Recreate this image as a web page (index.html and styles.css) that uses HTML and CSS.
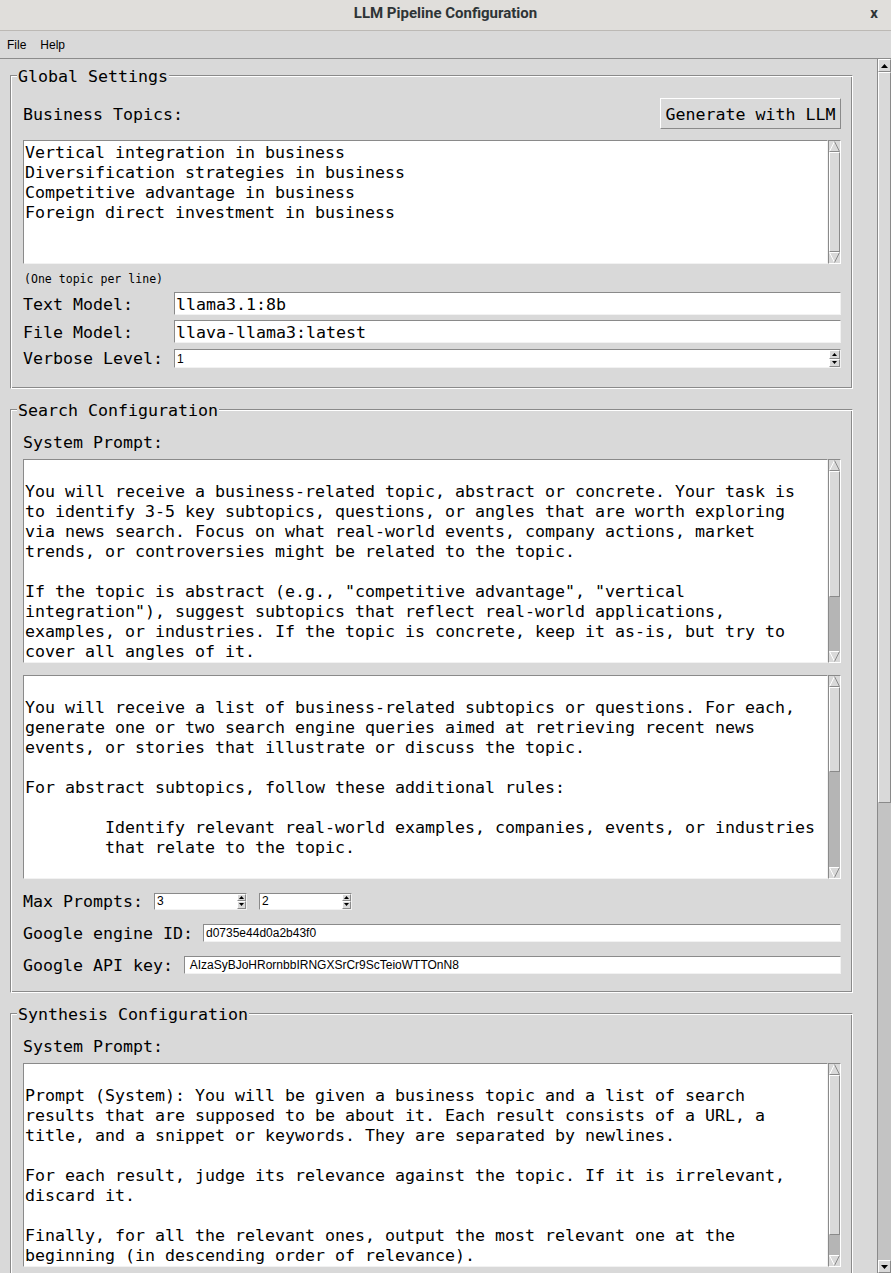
FILE: index.html
```html
<!DOCTYPE html>
<html>
<head>
<meta charset="utf-8">
<title>LLM Pipeline Configuration</title>
<link rel="stylesheet" href="styles.css">
</head>
<body>
<div class="window">
  <div class="titlebar">
    <span class="title">LLM Pipeline Configuration</span>
    <span class="close">x</span>
  </div>
  <div class="menubar">
    <span class="menu">File</span><span class="menu">Help</span>
  </div>
  <div class="main">
    <div class="content">

      <section class="lframe">
        <div class="lf-head"><span class="lf-left"></span><span class="lf-title">Global Settings</span><span class="lf-right"></span></div>
        <div class="lf-body body-global">
          <div class="row-btn">
            <span class="lbl">Business Topics:</span>
            <button class="btn">Generate with LLM</button>
          </div>
          <div class="textbox tb-topics">
            <div class="text">Vertical integration in business
Diversification strategies in business
Competitive advantage in business
Foreign direct investment in business</div>
            <div class="tsb">
              <svg class="tsb-arrow" width="11" height="11" viewBox="0 0 11 11"><polygon points="0.5,10.5 5.5,0.5 10.5,10.5" fill="#d9d9d9"/><polyline points="0.5,10.5 5.5,0.5" stroke="#fff" fill="none"/><polyline points="5.5,0.5 10.5,10.5 0.5,10.5" stroke="#8a8a8a" fill="none"/></svg>
              <div class="tsb-track"><div class="tsb-slider" style="height:100%"></div></div>
              <svg class="tsb-arrow" width="11" height="11" viewBox="0 0 11 11"><polygon points="0.5,0.5 10.5,0.5 5.5,10.5" fill="#d9d9d9"/><polyline points="5.5,10.5 0.5,0.5 10.5,0.5" stroke="#fff" fill="none"/><polyline points="10.5,0.5 5.5,10.5" stroke="#8a8a8a" fill="none"/></svg>
            </div>
          </div>
          <div class="hint">(One topic per line)</div>
          <div class="form">
            <span class="lbl">Text Model:</span>
            <div class="entry">llama3.1:8b</div>
            <span class="lbl">File Model:</span>
            <div class="entry">llava-llama3:latest</div>
            <span class="lbl">Verbose Level:</span>
            <div class="spin spin-v">
              <span class="spin-val">1</span>
              <span class="spin-arrows">
                <span class="spin-btn"><svg width="5" height="3" viewBox="0 0 5 3"><polygon points="0,3 5,3 2.5,0"/></svg></span>
                <span class="spin-btn"><svg width="5" height="3" viewBox="0 0 5 3"><polygon points="0,0 5,0 2.5,3"/></svg></span>
              </span>
            </div>
          </div>
        </div>
      </section>

      <section class="lframe">
        <div class="lf-head"><span class="lf-left"></span><span class="lf-title">Search Configuration</span><span class="lf-right"></span></div>
        <div class="lf-body body-search">
          <div class="lbl-row">System Prompt:</div>
          <div class="textbox tb-prompt">
            <div class="text">
You will receive a business-related topic, abstract or concrete. Your task is
to identify 3-5 key subtopics, questions, or angles that are worth exploring
via news search. Focus on what real-world events, company actions, market
trends, or controversies might be related to the topic.

If the topic is abstract (e.g., "competitive advantage", "vertical
integration"), suggest subtopics that reflect real-world applications,
examples, or industries. If the topic is concrete, keep it as-is, but try to
cover all angles of it.</div>
            <div class="tsb">
              <svg class="tsb-arrow" width="11" height="11" viewBox="0 0 11 11"><polygon points="0.5,10.5 5.5,0.5 10.5,10.5" fill="#d9d9d9"/><polyline points="0.5,10.5 5.5,0.5" stroke="#fff" fill="none"/><polyline points="5.5,0.5 10.5,10.5 0.5,10.5" stroke="#8a8a8a" fill="none"/></svg>
              <div class="tsb-track"><div class="tsb-slider" style="height:70%"></div></div>
              <svg class="tsb-arrow" width="11" height="11" viewBox="0 0 11 11"><polygon points="0.5,0.5 10.5,0.5 5.5,10.5" fill="#d9d9d9"/><polyline points="5.5,10.5 0.5,0.5 10.5,0.5" stroke="#fff" fill="none"/><polyline points="10.5,0.5 5.5,10.5" stroke="#8a8a8a" fill="none"/></svg>
            </div>
          </div>
          <div class="textbox tb-prompt tb-second">
            <div class="text">
You will receive a list of business-related subtopics or questions. For each,
generate one or two search engine queries aimed at retrieving recent news
events, or stories that illustrate or discuss the topic.

For abstract subtopics, follow these additional rules:

        Identify relevant real-world examples, companies, events, or industries
        that relate to the topic.</div>
            <div class="tsb">
              <svg class="tsb-arrow" width="11" height="11" viewBox="0 0 11 11"><polygon points="0.5,10.5 5.5,0.5 10.5,10.5" fill="#d9d9d9"/><polyline points="0.5,10.5 5.5,0.5" stroke="#fff" fill="none"/><polyline points="5.5,0.5 10.5,10.5 0.5,10.5" stroke="#8a8a8a" fill="none"/></svg>
              <div class="tsb-track"><div class="tsb-slider" style="height:47%"></div></div>
              <svg class="tsb-arrow" width="11" height="11" viewBox="0 0 11 11"><polygon points="0.5,0.5 10.5,0.5 5.5,10.5" fill="#d9d9d9"/><polyline points="5.5,10.5 0.5,0.5 10.5,0.5" stroke="#fff" fill="none"/><polyline points="10.5,0.5 5.5,10.5" stroke="#8a8a8a" fill="none"/></svg>
            </div>
          </div>
          <div class="frow">
            <span class="lbl">Max Prompts:</span>
            <div class="spin spin-s">
              <span class="spin-val">3</span>
              <span class="spin-arrows">
                <span class="spin-btn"><svg width="5" height="3" viewBox="0 0 5 3"><polygon points="0,3 5,3 2.5,0"/></svg></span>
                <span class="spin-btn"><svg width="5" height="3" viewBox="0 0 5 3"><polygon points="0,0 5,0 2.5,3"/></svg></span>
              </span>
            </div>
            <div class="spin spin-s spin-next">
              <span class="spin-val">2</span>
              <span class="spin-arrows">
                <span class="spin-btn"><svg width="5" height="3" viewBox="0 0 5 3"><polygon points="0,3 5,3 2.5,0"/></svg></span>
                <span class="spin-btn"><svg width="5" height="3" viewBox="0 0 5 3"><polygon points="0,0 5,0 2.5,3"/></svg></span>
              </span>
            </div>
          </div>
          <div class="frow">
            <span class="lbl lbl-tight">Google engine ID:</span>
            <div class="entry entry-sans">d0735e44d0a2b43f0</div>
          </div>
          <div class="frow">
            <span class="lbl">Google API key:</span>
            <div class="entry entry-sans"> AIzaSyBJoHRornbbIRNGXSrCr9ScTeioWTTOnN8</div>
          </div>
        </div>
      </section>

      <section class="lframe">
        <div class="lf-head"><span class="lf-left"></span><span class="lf-title">Synthesis Configuration</span><span class="lf-right"></span></div>
        <div class="lf-body body-synth">
          <div class="lbl-row">System Prompt:</div>
          <div class="textbox tb-prompt">
            <div class="text">
Prompt (System): You will be given a business topic and a list of search
results that are supposed to be about it. Each result consists of a URL, a
title, and a snippet or keywords. They are separated by newlines.

For each result, judge its relevance against the topic. If it is irrelevant,
discard it.

Finally, for all the relevant ones, output the most relevant one at the
beginning (in descending order of relevance).</div>
            <div class="tsb">
              <svg class="tsb-arrow" width="11" height="11" viewBox="0 0 11 11"><polygon points="0.5,10.5 5.5,0.5 10.5,10.5" fill="#d9d9d9"/><polyline points="0.5,10.5 5.5,0.5" stroke="#fff" fill="none"/><polyline points="5.5,0.5 10.5,10.5 0.5,10.5" stroke="#8a8a8a" fill="none"/></svg>
              <div class="tsb-track"><div class="tsb-slider" style="height:89%"></div></div>
              <svg class="tsb-arrow" width="11" height="11" viewBox="0 0 11 11"><polygon points="0.5,0.5 10.5,0.5 5.5,10.5" fill="#d9d9d9"/><polyline points="5.5,10.5 0.5,0.5 10.5,0.5" stroke="#fff" fill="none"/><polyline points="10.5,0.5 5.5,10.5" stroke="#8a8a8a" fill="none"/></svg>
            </div>
          </div>
        </div>
      </section>

    </div>
    <div class="vsb">
      <span class="vsb-btn"><svg width="7" height="4" viewBox="0 0 7 4"><polygon points="0,4 7,4 3.5,0"/></svg></span>
      <div class="vsb-track"><div class="vsb-slider" style="height:61.5%"></div></div>
      <span class="vsb-btn"><svg width="7" height="4" viewBox="0 0 7 4"><polygon points="0,0 7,0 3.5,4"/></svg></span>
    </div>
  </div>
</div>
</body>
</html>
```

FILE: styles.css
```css
* { box-sizing: border-box; }
html, body { margin: 0; padding: 0; }
body {
  width: 891px;
  height: 1273px;
  overflow: hidden;
  background: #d9d9d9;
  color: #000;
  font-family: "DejaVu Sans Mono", "Liberation Mono", monospace;
  font-size: 16.61px;
  line-height: 20px;
}
.window { display: flex; flex-direction: column; height: 1273px; }

.titlebar {
  flex: none;
  height: 31px;
  padding-bottom: 4px;
  background: #e0dedb;
  border-bottom: 1px solid #bcb9b5;
  display: grid;
  grid-template-columns: 1fr auto 1fr;
  align-items: center;
  font-family: Roboto, "Liberation Sans", sans-serif;
  color: #2e3436;
}
.title { grid-column: 2; font-size: 15px; font-weight: 700; line-height: 18px; }
.close { grid-column: 3; justify-self: end; margin-right: 13px; font-size: 15px; font-weight: 700; line-height: 18px; }

.menubar {
  flex: none;
  height: 28px;
  border-bottom: 1px solid #8c8c8c;
  display: flex;
  align-items: center;
  font-family: "Liberation Sans", Arial, sans-serif;
  font-size: 12px;
  line-height: 14px;
}
.menu { padding: 0 7px; }

.main { flex: 1; min-height: 0; display: flex; overflow: hidden; }
.content { flex: 1; min-width: 0; padding: 7px 24px 0 10px; overflow: hidden; }

/* labelframe (groove) */
.lframe + .lframe { margin-top: 11px; }
.lf-head { display: flex; align-items: flex-end; height: 20px; }
.lf-left {
  flex: none; width: 7px; height: 11px;
  border-top: 1px solid #8a8a8a; border-left: 1px solid #8a8a8a;
  box-shadow: inset 1px 1px 0 #fff;
}
.lf-title { align-self: stretch; padding: 1px 1px 0; line-height: 20px; white-space: pre; }
.lf-right {
  flex: 1; height: 11px;
  border-top: 1px solid #8a8a8a; border-right: 1px solid #fff;
  box-shadow: inset 0 1px 0 #fff, inset -1px 0 0 #8a8a8a;
}
.lf-body {
  border-left: 1px solid #8a8a8a;
  border-right: 1px solid #fff;
  border-bottom: 1px solid #fff;
  box-shadow: inset 1px 0 0 #fff, inset -1px 0 0 #8a8a8a, inset 0 -1px 0 #8a8a8a;
  padding: 12px 11px 20px 12px;
}
.body-search { padding-bottom: 17px; }
.body-synth { padding-bottom: 40px; }

.lbl { white-space: pre; padding-top: 2px; }
.lbl-row { height: 20px; padding-top: 1px; white-space: pre; }

.row-btn { display: flex; justify-content: space-between; align-items: center; height: 31px; }
.btn {
  width: 181px; height: 31px; padding: 2px 0 0; margin: 0;
  background: #d9d9d9; color: #000;
  border: 1px solid; border-color: #fff #8a8a8a #8a8a8a #fff;
  font: inherit; line-height: 27px;
}

/* text widget with scrollbar */
.textbox { display: flex; }
.tb-topics { margin-top: 11px; height: 124px; }
.tb-prompt { margin-top: 7px; height: 204px; }
.tb-second { margin-top: 12px; }
.text {
  flex: 1; min-width: 0;
  background: #fff;
  border-top: 1px solid #8a8a8a; border-left: 1px solid #8a8a8a;
  border-bottom: 1px solid #f2f2f2; border-right: 1px solid #f2f2f2;
  padding: 2px 1px 0;
  white-space: pre;
  overflow: hidden;
}
.tsb {
  flex: none; width: 13px;
  display: flex; flex-direction: column;
  background: #b5b5b5;
  border-top: 1px solid #8a8a8a; border-left: 1px solid #8a8a8a;
  border-bottom: 1px solid #fff; border-right: 1px solid #fff;
}
.tsb-arrow { display: block; flex: none; width: 11px; height: 11px; background: #d9d9d9; }
.tsb-track { flex: 1; min-height: 0; display: flex; flex-direction: column; }
.tsb-slider {
  flex: none;
  background: #d9d9d9;
  border: 1px solid; border-color: #fff #8a8a8a #8a8a8a #fff;
}

.hint { margin-top: 7px; padding: 1px 0 0 1px; font-size: 11.55px; line-height: 14px; white-space: pre; }

.form {
  display: grid;
  grid-template-columns: auto 1fr;
  grid-template-rows: 23px 23px 20px;
  column-gap: 11px;
  row-gap: 5px;
  margin-top: 6px;
  align-items: center;
}

.entry {
  height: 23px;
  background: #fff;
  border-top: 1px solid #8a8a8a; border-left: 1px solid #8a8a8a;
  border-bottom: 1px solid #f2f2f2; border-right: 1px solid #f2f2f2;
  padding: 2px 1px 0;
  line-height: 19px;
  white-space: pre;
  overflow: hidden;
}
.entry-sans {
  flex: 1; min-width: 0;
  height: 18px;
  padding: 0 2px;
  font-family: "Liberation Sans", Arial, sans-serif;
  font-size: 12px;
  line-height: 16px;
}

.spin {
  display: flex;
  background: #fff;
  border-top: 1px solid #8a8a8a; border-left: 1px solid #8a8a8a;
  border-bottom: 1px solid #f2f2f2; border-right: 1px solid #f2f2f2;
  font-family: "Liberation Sans", Arial, sans-serif;
  font-size: 12px;
}
.spin-val { flex: 1; padding-left: 2px; display: flex; align-items: center; }
.spin-arrows { flex: none; display: flex; flex-direction: column; }
.spin-btn {
  flex: 1;
  display: flex; align-items: center; justify-content: center;
  background: #d9d9d9;
  border: 1px solid; border-color: #fff #8a8a8a #8a8a8a #fff;
}
.spin-btn svg { display: block; overflow: visible; }
.spin-v { align-self: end; height: 19px; }
.spin-v .spin-arrows { width: 11px; }
.spin-s { width: 93px; height: 17px; }
.spin-s .spin-arrows { width: 9px; }
.spin-next { margin-left: 1px; }

.frow { display: flex; align-items: center; gap: 11px; height: 20px; margin-top: 12px; }
.lbl-tight { margin-right: -1px; }

/* window scrollbar */
.vsb {
  flex: none; width: 14px;
  display: flex; flex-direction: column;
  border-left: 1px solid #8a8a8a;
}
.vsb-btn {
  flex: none; height: 13px;
  display: flex; align-items: center; justify-content: center;
  background: #d9d9d9;
  border: 1px solid; border-color: #fff #8a8a8a #8a8a8a #fff;
}
.vsb-btn svg { display: block; }
.vsb-track { flex: 1; min-height: 0; background: #c3c3c3; display: flex; flex-direction: column; }
.vsb-slider {
  flex: none;
  background: #d9d9d9;
  border: 1px solid; border-color: #fff #8a8a8a #8a8a8a #fff;
}
```
